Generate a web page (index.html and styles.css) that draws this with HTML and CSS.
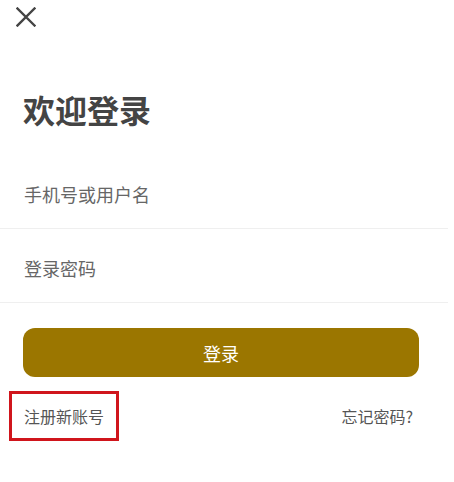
FILE: index.html
```html
<!DOCTYPE html>
<html lang="zh-CN">
<head>
<meta charset="utf-8">
<title>欢迎登录</title>
<link rel="stylesheet" href="styles.css">
</head>
<body>
<div class="page">
  <div class="topbar">
    <svg class="close" width="20" height="20" viewBox="0 0 20 20" aria-label="关闭">
      <path d="M1.5 1.5 L18.5 18.5 M18.5 1.5 L1.5 18.5" stroke="#444" stroke-width="2.4" stroke-linecap="square" fill="none"/>
    </svg>
  </div>
  <h1 class="title">欢迎登录</h1>
  <div class="field"><span class="placeholder">手机号或用户名</span></div>
  <div class="field"><span class="placeholder">登录密码</span></div>
  <div class="btn-wrap"><button class="login-btn">登录</button></div>
  <div class="links">
    <span class="register">注册新账号</span>
    <span class="forgot">忘记密码?</span>
  </div>
</div>
</body>
</html>
```
FILE: styles.css
```css
html, body {
  margin: 0;
  padding: 0;
  background: #fff;
}
body {
  font-family: "Noto Sans CJK SC", "Noto Sans", sans-serif;
}
.page {
  width: 448px;
}
.topbar {
  padding: 7px 0 0 16px;
  height: 20px;
}
.close {
  display: block;
}
.title {
  margin: 66px 0 0 23px;
  font-size: 32px;
  line-height: 32px;
  font-weight: 700;
  color: #444;
}
.field {
  margin-top: 0;
  padding: 30px 0 25px 24px;
  border-bottom: 1px solid #efefef;
}
.field:first-of-type {
  margin-top: 0;
}
.title + .field {
  margin-top: 30px;
}
.placeholder {
  display: block;
  font-size: 18px;
  line-height: 18px;
  color: #666;
}
.btn-wrap {
  padding: 25px 0 0 23px;
}
.login-btn {
  display: block;
  width: 396px;
  height: 49px;
  border: none;
  border-radius: 12px;
  background: #9b7600;
  color: #fff;
  font-family: "Noto Sans CJK SC", "Noto Sans", sans-serif;
  font-size: 18px;
  padding: 0;
}
.links {
  display: flex;
  justify-content: space-between;
  align-items: center;
  margin-top: 14px;
  padding: 0 35px 0 9px;
}
.register {
  display: block;
  border: 3px solid #d0151c;
  padding: 14px 12px;
  font-size: 16px;
  line-height: 16px;
  color: #555;
}
.forgot {
  font-size: 16px;
  line-height: 16px;
  color: #555;
}
```
